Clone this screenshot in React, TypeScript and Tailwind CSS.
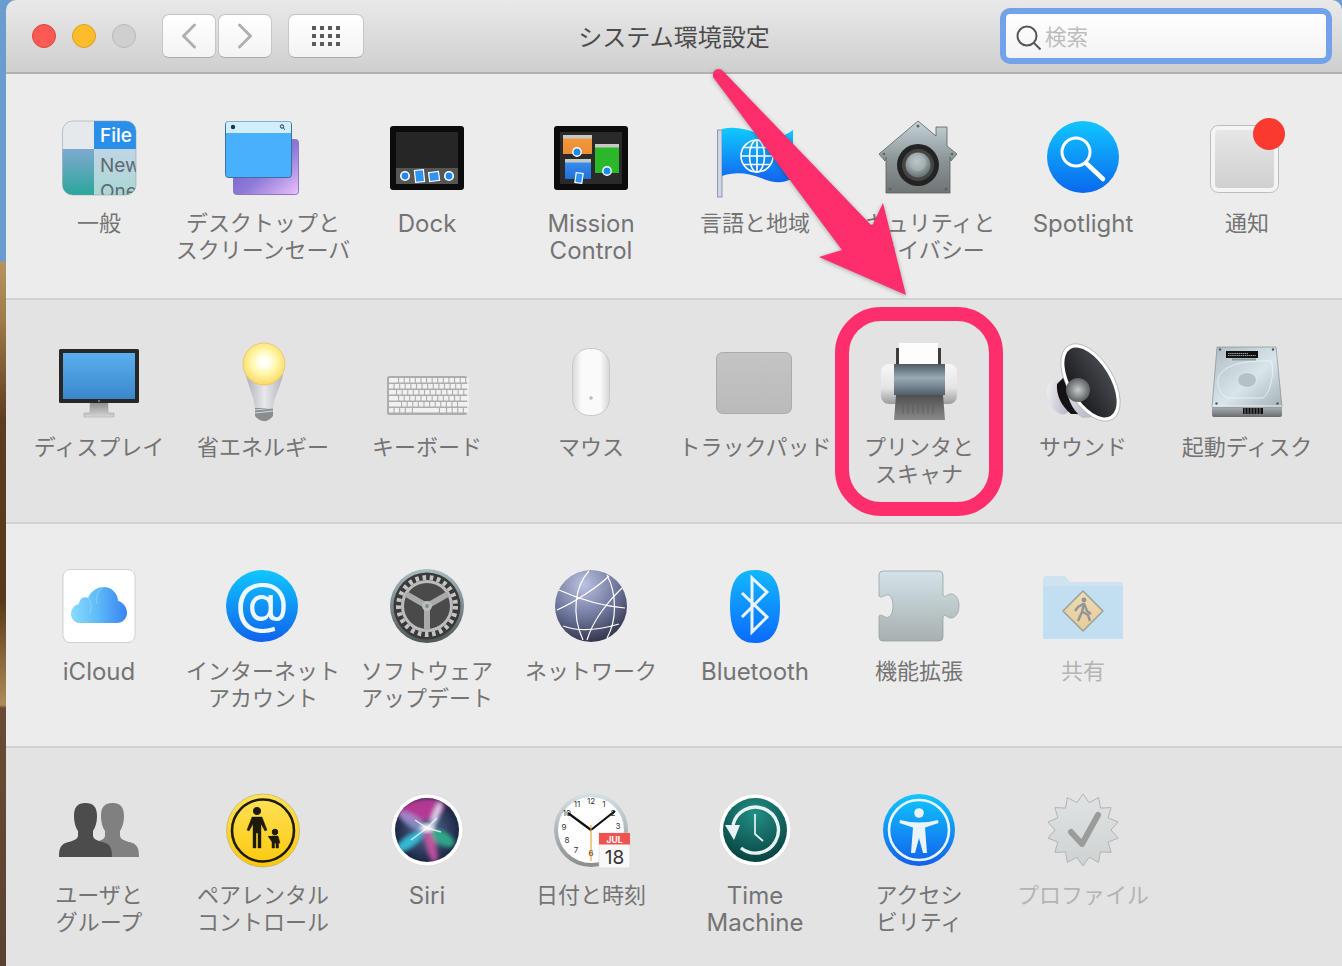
import React from 'react';

const PINK = '#fe2d6b';

function Shell({ children }: { children: React.ReactNode }) {
  return (
    <svg width="84" height="84" viewBox="0 0 84 84" className="block">
      {children}
    </svg>
  );
}

function GeneralIcon() {
  return (
    <Shell>
      <defs>
        <clipPath id="gen">
          <rect x="5.5" y="5" width="73.5" height="74" rx="10" />
        </clipPath>
        <linearGradient id="genL" x1="0" y1="0" x2="0" y2="1">
          <stop offset="0" stopColor="#7fa9cf" />
          <stop offset="1" stopColor="#2aa79b" />
        </linearGradient>
        <linearGradient id="genR" x1="0" y1="0" x2="0" y2="1">
          <stop offset="0" stopColor="#c1d5e6" />
          <stop offset="1" stopColor="#aad7d3" />
        </linearGradient>
      </defs>
      <g clipPath="url(#gen)">
        <rect x="5" y="5" width="32" height="28" fill="#e6e9ec" />
        <rect x="37" y="5" width="42" height="28" fill="#2a8fe9" />
        <rect x="5" y="33" width="32" height="46" fill="url(#genL)" />
        <rect x="37" y="33" width="42" height="46" fill="url(#genR)" />
        <text x="43" y="26" fontSize="19" fontWeight="500" fill="#fff" fontFamily="Inter, sans-serif">File</text>
        <text x="43" y="56" fontSize="19" fill="#5e6a72" fontFamily="Inter, sans-serif">New</text>
        <text x="43" y="82" fontSize="19" fill="#5e6a72" fontFamily="Inter, sans-serif">One</text>
      </g>
      <rect x="5.5" y="5" width="73.5" height="74" rx="10" fill="none" stroke="#8a9aa6" strokeOpacity="0.5" />
    </Shell>
  );
}

function DesktopIcon() {
  return (
    <Shell>
      <defs>
        <linearGradient id="dsk" x1="0" y1="0" x2="1" y2="1">
          <stop offset="0" stopColor="#6a56c0" />
          <stop offset="0.55" stopColor="#8e7ad8" />
          <stop offset="1" stopColor="#ecc0fc" />
        </linearGradient>
      </defs>
      <rect x="12.5" y="23.5" width="65" height="55" rx="3" fill="url(#dsk)" stroke="#8a78b8" />
      <rect x="4.5" y="5.5" width="66" height="56" rx="3" fill="#48b0fd" stroke="#3a6f9e" />
      <path d="M5 17V8a2.5 2.5 0 0 1 2.5-2.5h60A2.5 2.5 0 0 1 70 8v9z" fill="#d2edfd" />
      <circle cx="12" cy="11" r="2.2" fill="#1c3550" />
      <circle cx="61" cy="10.5" r="1.7" fill="none" stroke="#1c3550" />
      <path d="M62.3 12l1.7 1.7" stroke="#1c3550" />
    </Shell>
  );
}

function DockIcon() {
  return (
    <Shell>
      <rect x="5" y="10" width="74" height="64" rx="3" fill="#0c0c0c" />
      <rect x="11" y="16" width="62" height="52" fill="#262626" />
      <rect x="11" y="52" width="62" height="16" fill="#565656" />
      <circle cx="20" cy="60" r="5" fill="#fff" />
      <circle cx="20" cy="60" r="3.4" fill="#1e88f0" />
      <circle cx="64" cy="60" r="5" fill="#fff" />
      <circle cx="64" cy="60" r="3.4" fill="#1e88f0" />
      <rect x="30" y="54" width="9" height="12" fill="#2d94f2" stroke="#fff" strokeWidth="1.2" transform="rotate(-6 34.5 60)" />
      <rect x="44" y="56" width="10" height="9" fill="#2d94f2" stroke="#fff" strokeWidth="1.2" transform="rotate(-8 49 60)" />
    </Shell>
  );
}

function MissionIcon() {
  return (
    <Shell>
      <defs>
        <linearGradient id="msO" x1="0" y1="0" x2="0" y2="1">
          <stop offset="0" stopColor="#f09a3e" />
          <stop offset="1" stopColor="#ec8d34" />
        </linearGradient>
        <linearGradient id="msB" x1="0" y1="0" x2="0" y2="1">
          <stop offset="0" stopColor="#3c92ec" />
          <stop offset="1" stopColor="#1f70d8" />
        </linearGradient>
      </defs>
      <rect x="5" y="10" width="74" height="64" rx="3" fill="#0c0c0c" />
      <rect x="11" y="16" width="62" height="52" fill="#2a2a2a" />
      <rect x="14" y="19" width="29" height="19" fill="url(#msO)" />
      <rect x="14" y="19" width="29" height="3.5" fill="#c8c8c8" />
      <rect x="46" y="28" width="24" height="29" fill="#2ab82a" />
      <rect x="46" y="28" width="24" height="3.5" fill="#c8c8c8" />
      <rect x="16" y="43" width="26" height="20" fill="url(#msB)" />
      <rect x="16" y="43" width="26" height="3.5" fill="#c8c8c8" />
      <circle cx="28" cy="36" r="4.2" fill="#1e88f0" stroke="#fff" strokeWidth="1.4" />
      <circle cx="58" cy="55" r="4.2" fill="#1e88f0" stroke="#fff" strokeWidth="1.4" />
      <rect x="26.5" y="57" width="7" height="10" fill="#2d94f2" stroke="#fff" strokeWidth="1.2" transform="rotate(8 30 62)" />
    </Shell>
  );
}

function FlagIcon() {
  return (
    <Shell>
      <defs>
        <linearGradient id="flg" x1="0" y1="0" x2="0" y2="1">
          <stop offset="0" stopColor="#0fcaff" />
          <stop offset="1" stopColor="#1264ef" />
        </linearGradient>
      </defs>
      <rect x="4.5" y="14" width="4.5" height="67" fill="#cfd6e8" stroke="#7d88a8" strokeWidth="0.8" />
      <path d="M9 13C24 9 38 15 52 20C62 23 72 20 80 14V62C70 68 60 67 48 62C34 56 20 56 9 60z" fill="url(#flg)" />
      <g fill="none" stroke="#fff" strokeWidth="1.6">
        <circle cx="44" cy="40" r="16" />
        <ellipse cx="44" cy="40" rx="7.5" ry="16" />
        <path d="M44 24v32M28 40h32M30.5 31.5h27M30.5 48.5h27" />
      </g>
    </Shell>
  );
}

function SecurityIcon() {
  return (
    <Shell>
      <defs>
        <linearGradient id="sec" x1="0" y1="0" x2="0" y2="1">
          <stop offset="0" stopColor="#c6d4d8" />
          <stop offset="0.55" stopColor="#8a9496" />
          <stop offset="1" stopColor="#6f7475" />
        </linearGradient>
        <radialGradient id="secK" cx="0.45" cy="0.35" r="0.7">
          <stop offset="0" stopColor="#d4dde0" />
          <stop offset="1" stopColor="#5d6668" />
        </radialGradient>
      </defs>
      <path d="M41 5L59 20V11H70V30L80 38L74 45L73 41V77H9V41L8 45L2 38z" fill="url(#sec)" stroke="#5a6061" strokeWidth="0.8" />
      <circle cx="41" cy="49" r="21" fill="#232323" />
      <circle cx="41" cy="49" r="16" fill="#454545" />
      <circle cx="41" cy="49" r="12.5" fill="url(#secK)" />
      <circle cx="41" cy="47" r="8" fill="#a8b5b9" opacity="0.6" />
      <g fill="#5a6468">
        <circle cx="41" cy="10" r="1.5" />
        <circle cx="7" cy="38" r="1.3" />
        <circle cx="75" cy="38" r="1.3" />
        <circle cx="13" cy="73" r="1.5" />
        <circle cx="69" cy="73" r="1.5" />
      </g>
    </Shell>
  );
}

function SpotlightIcon() {
  return (
    <Shell>
      <defs>
        <linearGradient id="spt" x1="0" y1="0" x2="0" y2="1">
          <stop offset="0" stopColor="#10c6ff" />
          <stop offset="1" stopColor="#0a68ee" />
        </linearGradient>
      </defs>
      <circle cx="42" cy="41" r="36" fill="url(#spt)" />
      <circle cx="35" cy="36" r="14" fill="none" stroke="#fff" strokeWidth="3" />
      <path d="M45 47L62 63" stroke="#fff" strokeWidth="4.5" strokeLinecap="round" />
    </Shell>
  );
}

function NotifyIcon() {
  return (
    <Shell>
      <defs>
        <linearGradient id="ntf" x1="0" y1="0" x2="0" y2="1">
          <stop offset="0" stopColor="#e6e6e6" />
          <stop offset="1" stopColor="#d0d0d0" />
        </linearGradient>
      </defs>
      <rect x="5.5" y="9.5" width="68" height="67" rx="8" fill="#f4f4f4" stroke="#bdbdbd" />
      <rect x="10" y="14" width="59" height="58" rx="4" fill="url(#ntf)" />
      <circle cx="64" cy="18" r="16" fill="#fa3a2e" />
    </Shell>
  );
}

function DisplayIcon() {
  return (
    <Shell>
      <defs>
        <linearGradient id="dsp" x1="0" y1="0" x2="0" y2="1">
          <stop offset="0" stopColor="#5aaef0" />
          <stop offset="1" stopColor="#3a88cc" />
        </linearGradient>
        <linearGradient id="dspN" x1="0" y1="0" x2="0" y2="1">
          <stop offset="0" stopColor="#8f8f8f" />
          <stop offset="1" stopColor="#d6d6d6" />
        </linearGradient>
      </defs>
      <path d="M33 63H51V73H57V77H27V73H33z" fill="url(#dspN)" stroke="#a0a0a0" strokeWidth="0.5" />
      <rect x="2" y="9" width="80" height="54" rx="1.5" fill="#272727" />
      <rect x="6" y="13" width="72" height="46" fill="url(#dsp)" />
      <circle cx="42" cy="61" r="1" fill="#888" />
    </Shell>
  );
}

function BulbIcon() {
  return (
    <Shell>
      <defs>
        <radialGradient id="blb" cx="0.5" cy="0.45" r="0.55">
          <stop offset="0" stopColor="#ffffff" />
          <stop offset="0.22" stopColor="#fffff0" />
          <stop offset="0.55" stopColor="#fff6a6" />
          <stop offset="1" stopColor="#fbd868" />
        </radialGradient>
        <linearGradient id="blbB" x1="0" y1="0" x2="1" y2="0">
          <stop offset="0" stopColor="#b0b2b8" />
          <stop offset="0.5" stopColor="#e8e8ec" />
          <stop offset="1" stopColor="#b4b6bc" />
        </linearGradient>
      </defs>
      <path d="M34 68H52V76Q47 82 43 81Q38 81 34 76z" fill="#8b8d8e" />
      <path d="M34 70L52 68M34 73L52 71" stroke="#c9dbe8" strokeWidth="1.2" />
      <path d="M25 35H62C60 46 53 56 52 68H34C33 56 27 46 25 35z" fill="url(#blbB)" />
      <circle cx="43" cy="24" r="21" fill="url(#blb)" stroke="#eebf62" strokeWidth="0.8" />
    </Shell>
  );
}

const KEY_ROWS: number[][] = [
  [9, 4.5, 4.5, 4.5, 4.5, 4.5, 4.5, 4.5, 4.5, 4.5, 4.5, 4.5, 4.5, 6],
  [4.5, 4.5, 4.5, 4.5, 4.5, 4.5, 4.5, 4.5, 4.5, 4.5, 4.5, 4.5, 4.5, 9],
  [7, 4.5, 4.5, 4.5, 4.5, 4.5, 4.5, 4.5, 4.5, 4.5, 4.5, 4.5, 4.5, 6.5],
  [9, 4.5, 4.5, 4.5, 4.5, 4.5, 4.5, 4.5, 4.5, 4.5, 4.5, 4.5, 11],
  [12, 4.5, 4.5, 4.5, 4.5, 4.5, 4.5, 4.5, 4.5, 4.5, 4.5, 13],
  [4.5, 4.5, 4.5, 6, 26, 6, 4.5, 4.5, 4.5, 4.5],
];

function KeyboardIcon() {
  return (
    <Shell>
      <rect x="2" y="36" width="80" height="39" rx="2" fill="#adadad" />
      {KEY_ROWS.map((row, r) => {
        let x = 4;
        return row.map((w, i) => {
          const el = <rect key={`${r}-${i}`} x={x} y={38 + r * 6} width={w} height={4.6} rx="0.5" fill="#f1f1f1" />;
          x += w + 1.1;
          return el;
        });
      })}
    </Shell>
  );
}

function MouseIcon() {
  return (
    <Shell>
      <defs>
        <linearGradient id="mse" x1="0" y1="0" x2="1" y2="0">
          <stop offset="0" stopColor="#d9d9d9" />
          <stop offset="0.25" stopColor="#fafafa" />
          <stop offset="0.75" stopColor="#fafafa" />
          <stop offset="1" stopColor="#d6d6d6" />
        </linearGradient>
      </defs>
      <rect x="23.5" y="8.5" width="37" height="67" rx="17" fill="url(#mse)" stroke="#c8c8c8" />
      <circle cx="42" cy="58" r="1.8" fill="#bbb" />
    </Shell>
  );
}

function TrackpadIcon() {
  return (
    <Shell>
      <defs>
        <linearGradient id="trk" x1="0" y1="0" x2="0" y2="1">
          <stop offset="0" stopColor="#c4c4c4" />
          <stop offset="1" stopColor="#bababa" />
        </linearGradient>
      </defs>
      <rect x="3.5" y="12.5" width="75" height="61" rx="6" fill="url(#trk)" stroke="#ababab" />
    </Shell>
  );
}

function PrinterIcon() {
  return (
    <Shell>
      <defs>
        <linearGradient id="prn" x1="0" y1="0" x2="0" y2="1">
          <stop offset="0" stopColor="#4e5a64" />
          <stop offset="0.45" stopColor="#9aabb6" />
          <stop offset="1" stopColor="#525e68" />
        </linearGradient>
        <linearGradient id="prnE" x1="0" y1="0" x2="0" y2="1">
          <stop offset="0" stopColor="#f7f7f7" />
          <stop offset="0.6" stopColor="#e4e4e4" />
          <stop offset="1" stopColor="#9c9c9c" />
        </linearGradient>
        <linearGradient id="prnT" x1="0" y1="0" x2="0" y2="1">
          <stop offset="0" stopColor="#4f4f4f" />
          <stop offset="1" stopColor="#8a8a8a" />
        </linearGradient>
      </defs>
      <rect x="19" y="8" width="45" height="18" fill="#3d3d3d" />
      <rect x="22" y="3" width="39" height="22" fill="#fdfdfd" />
      <rect x="4" y="24" width="76" height="40" rx="8" fill="url(#prnE)" />
      <rect x="17" y="24" width="51" height="31" fill="url(#prn)" />
      <path d="M19 55H66L68 80H17z" fill="url(#prnT)" />
      <path d="M26 57v17M31 57v17M36 57v17M41 57v17M46 57v17M51 57v17M56 57v17" stroke="#5e5e5e" strokeWidth="0.8" />
    </Shell>
  );
}

function SpeakerIcon() {
  return (
    <Shell>
      <defs>
        <linearGradient id="spk" x1="0" y1="0" x2="1" y2="1">
          <stop offset="0" stopColor="#f8f8fa" />
          <stop offset="1" stopColor="#a8a8ba" />
        </linearGradient>
        <linearGradient id="spkI" x1="0" y1="0" x2="1" y2="0">
          <stop offset="0" stopColor="#1c1d20" />
          <stop offset="1" stopColor="#44474c" />
        </linearGradient>
        <radialGradient id="spkD" cx="0.5" cy="0.5" r="0.5">
          <stop offset="0" stopColor="#c8cccc" />
          <stop offset="1" stopColor="#5c6062" />
        </radialGradient>
      </defs>
      <ellipse cx="18" cy="57" rx="11" ry="18" transform="rotate(-20 18 57)" fill="url(#spk)" />
      <path d="M30 22L68 76L42 78L24 68L22 42z" fill="url(#spk)" />
      <path d="M22 38L16 44C15 54 20 66 30 74L37 74C28 64 24 52 27 38z" fill="#131313" />
      <ellipse cx="49.5" cy="42.5" rx="23" ry="43" transform="rotate(-31 49.5 42.5)" fill="#fff" stroke="#8e8e8e" strokeWidth="0.5" />
      <ellipse cx="49.5" cy="42.5" rx="19.5" ry="39" transform="rotate(-31 49.5 42.5)" fill="url(#spkI)" />
      <circle cx="37" cy="50" r="12" fill="url(#spkD)" />
    </Shell>
  );
}

function DiskIcon() {
  return (
    <Shell>
      <defs>
        <linearGradient id="dkT" x1="0" y1="0" x2="1" y2="1">
          <stop offset="0" stopColor="#aebbc0" />
          <stop offset="0.55" stopColor="#d8e6ec" />
          <stop offset="1" stopColor="#a4b2b8" />
        </linearGradient>
        <linearGradient id="dkB" x1="0" y1="0" x2="0" y2="1">
          <stop offset="0" stopColor="#aab0b2" />
          <stop offset="1" stopColor="#686c6e" />
        </linearGradient>
      </defs>
      <path d="M7 67H77V75Q77 77 75 77H9Q7 77 7 75z" fill="url(#dkB)" />
      <path d="M12 7H71L77 67H7z" fill="url(#dkT)" stroke="#7a8488" strokeWidth="0.6" />
      <path d="M7 66H77" stroke="#f4f4f4" strokeWidth="1.2" />
      <path d="M66 21C69 27 68 50 58 58H22C16 55 12 47 13 40C15 27 34 20 66 21z" fill="none" stroke="#eef6f8" strokeOpacity="0.8" />
      <ellipse cx="42" cy="40" rx="9.5" ry="7.5" fill="#b4c2c8" stroke="#e4eef0" strokeWidth="0.8" />
      <rect x="21" y="11" width="32" height="7" fill="#111" />
      <path d="M23 13.5h20M23 15.5h28" stroke="#c4c4c4" strokeWidth="0.8" strokeDasharray="1.5 0.6" />
      <rect x="27" y="18.5" width="24" height="2" fill="#8e9ca2" />
      <path d="M38 68h20v6H38z" fill="#111" />
      <path d="M40 68v6M43 68v6M46 68v6M49 68v6M52 68v6M55 68v6" stroke="#a8a8a8" strokeWidth="0.7" />
      <g fill="#4e5a60">
        <circle cx="15" cy="9.5" r="1.2" />
        <circle cx="68" cy="9.5" r="1.2" />
        <circle cx="11.5" cy="63.5" r="1.2" />
        <circle cx="72.5" cy="63.5" r="1.2" />
      </g>
    </Shell>
  );
}

function ICloudIcon() {
  return (
    <Shell>
      <defs>
        <linearGradient id="icl" x1="0" y1="0" x2="1" y2="0">
          <stop offset="0" stopColor="#8adcfb" />
          <stop offset="0.5" stopColor="#5cb8f8" />
          <stop offset="1" stopColor="#3a82f2" />
        </linearGradient>
      </defs>
      <rect x="6" y="5.5" width="72" height="73" rx="7" fill="#fff" stroke="#d0d0d0" />
      <path d="M23 59C17 59 14 54 14 50C14 45 17 41 22 40C22 35 27 32 31 34C34 27 40 23 47 23C55 23 61 30 61 37C66 38 70 43 70 49C70 55 65 59 60 59z" fill="url(#icl)" />
      <path d="M31 34C34 38 35 44 33 49M47 23C41 26 38 32 40 40" fill="none" stroke="#fff" strokeOpacity="0.25" />
    </Shell>
  );
}

function AtIcon() {
  return (
    <Shell>
      <defs>
        <linearGradient id="atg" x1="0" y1="0" x2="0" y2="1">
          <stop offset="0" stopColor="#10c6ff" />
          <stop offset="1" stopColor="#0f62ec" />
        </linearGradient>
      </defs>
      <circle cx="41" cy="42" r="36" fill="url(#atg)" />
      <text x="41" y="58" textAnchor="middle" fontSize="56" fontWeight="400" fill="#eef6ff" fontFamily="Inter, sans-serif">@</text>
    </Shell>
  );
}

function GearIcon() {
  return (
    <Shell>
      <defs>
        <linearGradient id="grR" x1="0" y1="0" x2="0" y2="1">
          <stop offset="0" stopColor="#a8bcc2" />
          <stop offset="1" stopColor="#505658" />
        </linearGradient>
      </defs>
      <circle cx="42" cy="42" r="37" fill="url(#grR)" />
      <circle cx="42" cy="42" r="33.5" fill="#3a3a3a" />
      <circle cx="42" cy="42" r="28.5" fill="none" stroke="#c4c4c4" strokeWidth="5" strokeDasharray="3.6 3.6" />
      <circle cx="42" cy="42" r="24.5" fill="#4a4a4a" stroke="#bcbcbc" strokeWidth="3" />
      <path d="M42 42L42 66M42 42L21 30M42 42L63 30" stroke="#aaa" strokeWidth="6" />
      <circle cx="42" cy="42" r="5" fill="#bdbdbd" />
      <circle cx="42" cy="42" r="2" fill="#7e8e96" />
    </Shell>
  );
}

function NetworkIcon() {
  return (
    <Shell>
      <defs>
        <radialGradient id="net" cx="0.4" cy="0.2" r="0.85">
          <stop offset="0" stopColor="#bcc2e2" />
          <stop offset="0.55" stopColor="#6f769c" />
          <stop offset="1" stopColor="#2c2e42" />
        </radialGradient>
      </defs>
      <circle cx="42" cy="42" r="36" fill="url(#net)" />
      <g fill="none" stroke="#fff" strokeWidth="1.2">
        <path d="M10 26C28 34 50 42 76 44" />
        <path d="M8 46C26 38 50 22 60 12" />
        <path d="M40 7C26 22 22 50 34 76" />
        <path d="M58 11C68 30 68 56 58 74" />
        <path d="M73 24C60 36 44 56 38 76" />
        <path d="M14 62C30 68 50 66 70 60" />
      </g>
    </Shell>
  );
}

function BluetoothIcon() {
  return (
    <Shell>
      <defs>
        <linearGradient id="btg" x1="0" y1="0" x2="0" y2="1">
          <stop offset="0" stopColor="#12b8ff" />
          <stop offset="1" stopColor="#0a6aff" />
        </linearGradient>
      </defs>
      <path d="M42 6C60 6 67 18 67 42C67 66 60 79 42 79C24 79 17 66 17 42C17 18 24 6 42 6z" fill="url(#btg)" />
      <path d="M29 29L54 53L39 68V14L54 28L29 53" fill="none" stroke="#eaf4ff" strokeWidth="3" />
    </Shell>
  );
}

function PuzzleIcon() {
  return (
    <Shell>
      <defs>
        <linearGradient id="pzl" x1="0" y1="0" x2="0" y2="1">
          <stop offset="0" stopColor="#d4e3e7" />
          <stop offset="1" stopColor="#a7afb1" />
        </linearGradient>
      </defs>
      <path d="M6 7H62Q66 7 66 11V31C68 35 71 29 75 30C80 31 82 37 82 42C82 48 79 54 74 54C70 54 68 49 66 53V73Q66 77 62 77H6Q2 77 2 73V52C5 49 8 55 12 53C15 51 16 46 16 42C16 37 15 33 12 31C8 30 5 35 2 32V11Q2 7 6 7z" fill="url(#pzl)" stroke="#949c9e" strokeWidth="0.7" />
    </Shell>
  );
}

function SharedIcon() {
  return (
    <Shell>
      <defs>
        <linearGradient id="shd" x1="0" y1="0" x2="0" y2="1">
          <stop offset="0" stopColor="#ecdcb4" />
          <stop offset="1" stopColor="#e8cb9c" />
        </linearGradient>
      </defs>
      <path d="M5 12H24L29 18H80Q82 18 82 20V73Q82 75 80 75H4Q2 75 2 73V15Q2 12 5 12z" fill="#cfe2ef" />
      <path d="M2 22H82V73Q82 75 80 75H4Q2 75 2 73z" fill="#c2def1" />
      <path d="M42 27L62 47L42 67L22 47z" fill="url(#shd)" stroke="#a0a09a" strokeWidth="1.6" strokeLinejoin="round" />
      <circle cx="43" cy="36" r="2.4" fill="#949494" />
      <path d="M43 39.5L37 43L34 47M43 39.5L46 47L50 50M43 40L41 48L37 57M42 48L47 51L49 57" fill="none" stroke="#949494" strokeWidth="2.4" />
    </Shell>
  );
}

function UsersIcon() {
  const person =
    'M0 0C8 0 11.5 4 11.5 13C11.5 20 9.5 25 7.5 28V33C8 37 14 38 20 40C25 42 26.5 46 26.5 54H-26.5C-26.5 46 -25 42 -20 40C-14 38 -8 37 -7.5 33V28C-9.5 25 -11.5 20 -11.5 13C-11.5 4 -8 0 0 0z';
  return (
    <Shell>
      <path d={person} transform="translate(55.5 15)" fill="#808080" />
      <path d={person} transform="translate(28.5 15)" fill="#4c4c4c" />
    </Shell>
  );
}

function ParentalIcon() {
  return (
    <Shell>
      <defs>
        <linearGradient id="par" x1="0" y1="0" x2="0" y2="1">
          <stop offset="0" stopColor="#ffe25a" />
          <stop offset="1" stopColor="#fbc80c" />
        </linearGradient>
      </defs>
      <circle cx="42" cy="42.5" r="36.5" fill="url(#par)" stroke="#b8a860" strokeWidth="0.6" />
      <circle cx="42" cy="42.5" r="31" fill="none" stroke="#1d1a0a" strokeWidth="2.6" />
      <g fill="#1d1a0a" stroke="#1d1a0a">
        <circle cx="36" cy="23" r="3.6" />
        <path d="M31 29H41L46 42L44 43L40 36V60H37V45H35V60H32V36L28 43L26 42z" strokeWidth="0.4" />
        <circle cx="54" cy="44" r="2.8" />
        <path d="M51 48H57L59 55H57.5V60H55V55H53.5V60H51V54L47 48" strokeWidth="0.5" />
      </g>
    </Shell>
  );
}

function SiriIcon() {
  return (
    <Shell>
      <defs>
        <radialGradient id="sri" cx="0.5" cy="0.5" r="0.55">
          <stop offset="0" stopColor="#5a6c98" />
          <stop offset="1" stopColor="#16203c" />
        </radialGradient>
        <clipPath id="sric">
          <circle cx="42" cy="42" r="32" />
        </clipPath>
        <filter id="srib" x="-20%" y="-20%" width="140%" height="140%">
          <feGaussianBlur stdDeviation="2.2" />
        </filter>
      </defs>
      <circle cx="42" cy="42" r="36" fill="#fff" stroke="#cfcfcf" strokeWidth="0.5" />
      <circle cx="42" cy="42" r="32" fill="url(#sri)" />
      <g clipPath="url(#sric)">
        <g filter="url(#srib)">
          <ellipse cx="36" cy="22" rx="24" ry="11" fill="#c2379a" opacity="0.9" transform="rotate(-10 36 22)" />
          <ellipse cx="57" cy="50" rx="14" ry="7" fill="#2bb08c" opacity="0.9" transform="rotate(30 57 50)" />
          <ellipse cx="24" cy="54" rx="17" ry="6" fill="#34c7e0" opacity="0.9" transform="rotate(-35 24 54)" />
          <ellipse cx="46" cy="58" rx="5" ry="18" fill="#d454a8" opacity="0.85" transform="rotate(-15 46 58)" />
          <ellipse cx="27" cy="33" rx="15" ry="6" fill="#9aa0d8" opacity="0.75" transform="rotate(35 27 33)" />
          <ellipse cx="51" cy="27" rx="3.5" ry="14" fill="#e8e8ff" opacity="0.85" transform="rotate(20 51 27)" />
        </g>
        <ellipse cx="42" cy="40" rx="7" ry="4" fill="#fff" filter="url(#srib)" />
        <path d="M26 52L42 40L52 30M30 32L42 40L56 44" stroke="#fff" strokeOpacity="0.75" strokeWidth="1.4" fill="none" />
      </g>
    </Shell>
  );
}

const CLOCK_NUMS = [
  ['12', 42, 16], ['1', 55, 19], ['2', 64, 28], ['3', 69, 41], ['6', 42, 68],
  ['7', 27, 65], ['8', 18, 55], ['9', 15, 42], ['10', 18, 28], ['11', 28, 19],
] as const;

function ClockIcon() {
  return (
    <Shell>
      <defs>
        <linearGradient id="clk" x1="0" y1="0" x2="0" y2="1">
          <stop offset="0" stopColor="#d4e2e8" />
          <stop offset="1" stopColor="#8c8c8c" />
        </linearGradient>
      </defs>
      <circle cx="42" cy="42" r="37" fill="url(#clk)" />
      <circle cx="42" cy="42" r="33" fill="#fff" />
      {CLOCK_NUMS.map(([n, x, y]) => (
        <text key={n} x={x} y={y} textAnchor="middle" fontSize="8" fill="#333" fontFamily="Inter, sans-serif">{n}</text>
      ))}
      <path d="M42 42L19 25M42 42L66 23" stroke="#111" strokeWidth="2.2" />
      <path d="M42 37V73" stroke="#e8921c" strokeWidth="1" />
      <rect x="50" y="45" width="31" height="35" fill="#f8f8f8" stroke="#cfcfcf" strokeWidth="0.5" />
      <rect x="50" y="45" width="31" height="11.5" fill="#ee5350" />
      <text x="65.5" y="54.5" textAnchor="middle" fontSize="8.5" fontWeight="700" fill="#fff" fontFamily="Inter, sans-serif">JUL</text>
      <text x="65.5" y="76" textAnchor="middle" fontSize="19" fill="#333" fontFamily="Inter, sans-serif">18</text>
    </Shell>
  );
}

function TimeMachineIcon() {
  return (
    <Shell>
      <defs>
        <radialGradient id="tmg" cx="0.5" cy="0.25" r="0.85">
          <stop offset="0" stopColor="#219085" />
          <stop offset="1" stopColor="#06383a" />
        </radialGradient>
      </defs>
      <circle cx="42" cy="42" r="36" fill="#fff" stroke="#d0d0d0" strokeWidth="0.5" />
      <circle cx="42" cy="42" r="32" fill="url(#tmg)" />
      <path d="M20 37A23 23 0 1 1 28 60" fill="none" stroke="#e8f2f0" strokeWidth="3.4" />
      <path d="M12 37H27L21 52z" fill="#e8f2f0" />
      <path d="M42 26V46L50 53" fill="none" stroke="#e8f2f0" strokeWidth="1.7" />
    </Shell>
  );
}

function AccessIcon() {
  return (
    <Shell>
      <defs>
        <linearGradient id="acc" x1="0" y1="0" x2="0" y2="1">
          <stop offset="0" stopColor="#10c6ff" />
          <stop offset="1" stopColor="#1260ea" />
        </linearGradient>
      </defs>
      <circle cx="42" cy="42" r="36" fill="url(#acc)" />
      <circle cx="42" cy="42" r="30" fill="none" stroke="#eaf4ff" strokeWidth="2.6" />
      <circle cx="42" cy="25" r="4.8" fill="#eaf4ff" />
      <path d="M23 32Q42 37 61 32L61.5 35L48 39.5L50 65L46 65L42 50L38 65L34 65L36 39.5L22.5 35z" fill="#eaf4ff" />
    </Shell>
  );
}

function starPoints() {
  const pts: string[] = [];
  for (let i = 0; i < 28; i++) {
    const r = i % 2 === 0 ? 36 : 28;
    const a = (Math.PI * i) / 14 - Math.PI / 2;
    pts.push(`${(42 + r * Math.cos(a)).toFixed(1)},${(42 + r * Math.sin(a)).toFixed(1)}`);
  }
  return pts.join(' ');
}

function ProfileIcon() {
  return (
    <Shell>
      <defs>
        <linearGradient id="prf" x1="0" y1="0" x2="0" y2="1">
          <stop offset="0" stopColor="#e0e3e4" />
          <stop offset="1" stopColor="#cfd2d3" />
        </linearGradient>
      </defs>
      <polygon points={starPoints()} fill="url(#prf)" stroke="#b0b4b6" />
      <path d="M30 44L41 56L57 27" fill="none" stroke="#9b9b9b" strokeWidth="6" strokeLinecap="round" strokeLinejoin="round" />
    </Shell>
  );
}

type Item = { lines: string[]; icon: React.ReactNode; dim?: boolean };

const ROWS: { bg: string; items: Item[] }[] = [
  {
    bg: 'h-[226px] pt-[2px] bg-[#ececec]',
    items: [
      { lines: ['一般'], icon: <GeneralIcon /> },
      { lines: ['デスクトップと', 'スクリーンセーバ'], icon: <DesktopIcon /> },
      { lines: ['Dock'], icon: <DockIcon /> },
      { lines: ['Mission', 'Control'], icon: <MissionIcon /> },
      { lines: ['言語と地域'], icon: <FlagIcon /> },
      { lines: ['セキュリティと', 'プライバシー'], icon: <SecurityIcon /> },
      { lines: ['Spotlight'], icon: <SpotlightIcon /> },
      { lines: ['通知'], icon: <NotifyIcon /> },
    ],
  },
  {
    bg: 'h-[224px] bg-[#e3e3e3]',
    items: [
      { lines: ['ディスプレイ'], icon: <DisplayIcon /> },
      { lines: ['省エネルギー'], icon: <BulbIcon /> },
      { lines: ['キーボード'], icon: <KeyboardIcon /> },
      { lines: ['マウス'], icon: <MouseIcon /> },
      { lines: ['トラックパッド'], icon: <TrackpadIcon /> },
      { lines: ['プリンタと', 'スキャナ'], icon: <PrinterIcon /> },
      { lines: ['サウンド'], icon: <SpeakerIcon /> },
      { lines: ['起動ディスク'], icon: <DiskIcon /> },
    ],
  },
  {
    bg: 'h-[224px] bg-[#ececec]',
    items: [
      { lines: ['iCloud'], icon: <ICloudIcon /> },
      { lines: ['インターネット', 'アカウント'], icon: <AtIcon /> },
      { lines: ['ソフトウェア', 'アップデート'], icon: <GearIcon /> },
      { lines: ['ネットワーク'], icon: <NetworkIcon /> },
      { lines: ['Bluetooth'], icon: <BluetoothIcon /> },
      { lines: ['機能拡張'], icon: <PuzzleIcon /> },
      { lines: ['共有'], icon: <SharedIcon />, dim: true },
    ],
  },
  {
    bg: 'h-[224px] bg-[#e3e3e3]',
    items: [
      { lines: ['ユーザと', 'グループ'], icon: <UsersIcon /> },
      { lines: ['ペアレンタル', 'コントロール'], icon: <ParentalIcon /> },
      { lines: ['Siri'], icon: <SiriIcon /> },
      { lines: ['日付と時刻'], icon: <ClockIcon /> },
      { lines: ['Time', 'Machine'], icon: <TimeMachineIcon /> },
      { lines: ['アクセシ', 'ビリティ'], icon: <AccessIcon /> },
      { lines: ['プロファイル'], icon: <ProfileIcon />, dim: true },
    ],
  },
];

function Toolbar() {
  const btn =
    'flex h-[44px] items-center justify-center rounded-[7px] border border-[#c6c6c6] border-b-[#adadad] bg-gradient-to-b from-white to-[#f3f3f3]';
  return (
    <div className="grid h-[74px] shrink-0 grid-cols-[1fr_auto_1fr] items-center border-b-2 border-[#b1b1b1] bg-gradient-to-b from-[#e9e9e9] to-[#cfcfcf]">
      <div className="flex items-center pl-[26px]">
        <div className="flex gap-4">
          <div className="h-6 w-6 rounded-full border border-[#e0443e] bg-[#fd5a55]" />
          <div className="h-6 w-6 rounded-full border border-[#e0a028] bg-[#febb2c]" />
          <div className="h-6 w-6 rounded-full border border-[#b8b8b8] bg-[#cfcfcf]" />
        </div>
        <div className="ml-[26px] flex gap-[2px]">
          <div className={`${btn} w-[54px]`}>
            <svg width="16" height="26" viewBox="0 0 16 26" fill="none" stroke="#b0b0b0" strokeWidth="3" strokeLinecap="round" strokeLinejoin="round">
              <path d="M13.5 2L2.5 13L13.5 24" />
            </svg>
          </div>
          <div className={`${btn} w-[54px]`}>
            <svg width="16" height="26" viewBox="0 0 16 26" fill="none" stroke="#b0b0b0" strokeWidth="3" strokeLinecap="round" strokeLinejoin="round">
              <path d="M2.5 2L13.5 13L2.5 24" />
            </svg>
          </div>
        </div>
        <div className={`${btn} ml-[16px] w-[76px]`}>
          <div className="grid grid-cols-4 gap-x-[4px] gap-y-[4px]">
            {Array.from({ length: 12 }).map((_, i) => (
              <div key={i} className="h-[4px] w-[4px] bg-[#5a5a5a]" />
            ))}
          </div>
        </div>
      </div>
      <div className="text-[24px] leading-none text-[#4c4c4c] [font-family:'Noto_Sans_CJK_JP',sans-serif]">
        システム環境設定
      </div>
      <div className="flex justify-end pr-[10px]">
        <div className="flex h-[56px] w-[332px] items-center rounded-[10px] border-[6px] border-[#72a2ea] bg-gradient-to-b from-white to-[#f3f3f3] pl-[10px]">
          <svg width="26" height="26" viewBox="0 0 26 26" fill="none" stroke="#555" className="mt-[3px] shrink-0">
            <circle cx="11" cy="11" r="9.5" strokeWidth="2" />
            <path d="M18 18L24.5 24.5" strokeWidth="2" />
          </svg>
          <span className="ml-[3px] text-[21.5px] leading-none text-[#bdbdbd] [font-family:'Noto_Sans_CJK_JP',sans-serif]">検索</span>
        </div>
      </div>
    </div>
  );
}

export default function App() {
  return (
    <div className="relative h-[966px] w-[1342px] overflow-hidden bg-[linear-gradient(180deg,#6a9ccf_0,#6a9ccf_261px,#b8935f_262px,#a07a48_320px,#5f3c20_420px,#5a3818_600px,#b08a58_705px,#6a4c34_708px,#5c4030_966px)] pl-[6px] [font-family:Inter,'Noto_Sans_CJK_JP',sans-serif]">
      <div className="flex h-full flex-col overflow-hidden rounded-tl-[10px] rounded-tr-[10px]">
        <Toolbar />
        {ROWS.map((row, r) => (
          <div
            key={r}
            className={`grid shrink-0 grid-cols-[repeat(8,164px)] border-b-2 border-[#d2d2d2] pl-[11px] ${row.bg}`}
          >
            {row.items.map((item) => (
              <div key={item.lines[0]} className="flex flex-col items-center pt-[40px]">
                {item.icon}
                <div
                  className={`mt-[10px] text-center leading-[27px] whitespace-nowrap ${
                    item.dim ? 'text-[#b4b4b4]' : 'text-[#747474]'
                  }`}
                >
                  {item.lines.map((line) => (
                    <div key={line} className={/^[A-Za-z]/.test(line) ? 'text-[24px]' : 'text-[22px]'}>
                      {line}
                    </div>
                  ))}
                </div>
              </div>
            ))}
          </div>
        ))}
      </div>

      {/* annotation */}
      <div
        className="absolute left-[835px] top-[307px] h-[209px] w-[168px] rounded-[46px] border-[14px]"
        style={{ borderColor: PINK }}
      />
      <svg className="absolute left-0 top-0 drop-shadow-[0_1px_2px_rgba(0,0,0,0.3)]" width="1342" height="966" viewBox="0 0 1342 966">
        <path
          d="M713 74Q714 69 719 69Q721 69 723 71L872 226L883 203L906 295L819 257L842 250L713 77z"
          fill={PINK}
        />
      </svg>
    </div>
  );
}
